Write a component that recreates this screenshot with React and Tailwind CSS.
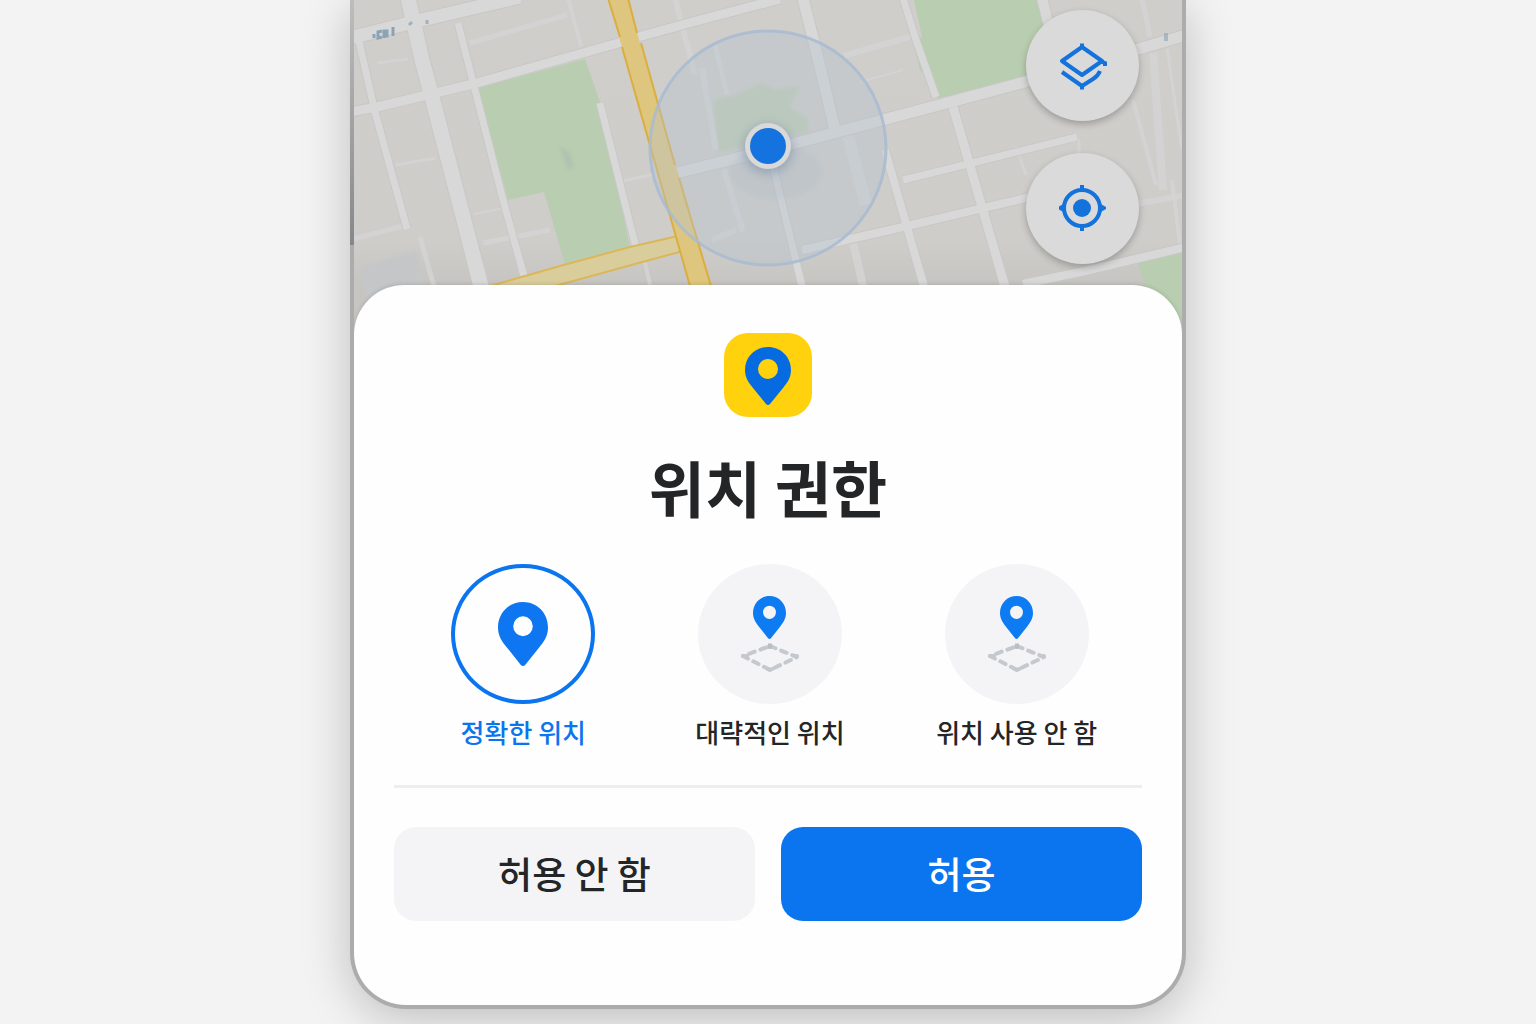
import { useState } from "react";

const parks = [
  "M478 88L585 59L601 105L630 248L565 265L544 192L508 200Z",
  "M914 0H1040L1060 74L938 98L930 70L920 71L913 40L922 37Z",
  "M1138 263L1182 252V335H1160Z",
];

// Each street is [path, width].
const streets = [
  ["M357 30L361 50L375 112L407 229", 7],
  ["M350 112L377 107L473 84L622 42", 9],
  ["M638 37L700 20L780 -1", 9],
  ["M350 38L417 21L520 -3", 13],
  ["M408 -2L422 60L432 97L482 290", 15],
  ["M458 23L474 86L503 200L524 276", 7],
  ["M600 103L636 248", 7],
  ["M803 -2L822 75L835 130", 11],
  ["M676 173L770 150L890 118L1025 82L1186 35", 11],
  ["M772 162L803 290", 7],
  ["M885 150L925 290", 8],
  ["M802 250L890 230L1060 190", 8],
  ["M903 -2L915 37L936 97", 7],
  ["M903 180L1077 137", 7],
  ["M953 107L1006 290", 9],
  ["M1042 -2L1050 30", 10],
  ["M1023 284L1085 271L1186 247", 8],
];

const lanes = [
  ["M675 -2L695 75", 6],
  ["M702 68L716 150", 6],
  ["M724 170L743 232", 6],
  ["M848 135L866 205", 12],
  ["M852 238L864 290", 8],
  ["M470 43L567 15", 5],
  ["M568 -2L581 46", 4],
  ["M377 63L408 59", 3],
  ["M395 165L436 158", 3],
  ["M483 243L550 230", 5],
  ["M350 240L407 225", 5],
  ["M420 237L435 290", 5],
  ["M474 214L505 208", 2],
  ["M715 45L727 95", 5],
  ["M843 56L910 37", 6],
  ["M903 70L860 82", 2],
  ["M623 181L655 174", 3],
  ["M712 240L736 230", 6],
  ["M645 262L650 285", 4],
  ["M1142 -2L1150 37", 5],
  ["M1153 53L1163 190", 8],
  ["M1133 100L1156 185", 4],
  ["M1167 48L1182 150", 3],
  ["M1120 207L1186 195", 6],
  ["M1172 180L1180 245", 4],
  ["M1016 146L1026 175", 3],
  ["M1079 140L1079 155", 3],
];

function MapCanvas() {
  return (
    <svg
      className="block h-full w-full"
      viewBox="354 0 828 335"
      preserveAspectRatio="xMidYMin slice"
      role="img"
      aria-label="지도"
    >
      <defs>
        <linearGradient id="ground" x1="0" y1="0" x2="0" y2="1">
          <stop offset="0" stopColor="#cfcecb" />
          <stop offset="0.72" stopColor="#cfcdca" />
          <stop offset="0.85" stopColor="#c6c5c2" />
        </linearGradient>
        <filter id="soft" x="-20%" y="-20%" width="140%" height="140%">
          <feGaussianBlur stdDeviation="2" />
        </filter>
        <filter id="glow" x="-60%" y="-60%" width="220%" height="220%">
          <feGaussianBlur stdDeviation="5" />
        </filter>
      </defs>
      <rect x="354" width="828" height="335" fill="url(#ground)" />
      <path d="M360 267L417 250L425 295L366 300Z" fill="#c4c6c7" filter="url(#soft)" />
      {parks.map((d) => (
        <path key={d} d={d} fill="#b9ceb0" />
      ))}
      <path d="M559 146L570 152L574 168L568 170Z" fill="#aec2b0" filter="url(#soft)" />
      <path
        d="M713 100L735 95L763 82L773 89L800 86L790 108L808 118V133L773 140L717 153Z"
        fill="#bfccb3"
        filter="url(#soft)"
      />
      <g fill="none" strokeLinejoin="round">
        {lanes.map(([d, w]) => (
          <path key={d} d={d} stroke="#d5d5d4" strokeWidth={w} opacity="0.8" />
        ))}
        {streets.map(([d, w]) => (
          <path key={d} d={d} stroke="#c8c7c5" strokeWidth={w + 2} />
        ))}
        {streets.map(([d, w]) => (
          <path key={d} d={d} stroke="#d8d8d8" strokeWidth={w} />
        ))}
      </g>
      <path d="M490 286L630 247L678 235L683 251L635 263L555 286Z" fill="#dacd9c" />
      <path d="M490 286L560 266L630 247L678 236M555 286L635 264L683 251" fill="none" stroke="#dcb75a" strokeWidth="2" />
      <path d="M608 -2H628L637 33L711 286L725 335H705L690 286L622 47Z" fill="#dec67e" />
      <path
        d="M608 -2L620 37M628 -2L637 33M622 47L690 286M641 43L675 165M679 178L711 286"
        fill="none"
        stroke="#dbae40"
        strokeWidth="2"
      />
      <g fill="none" stroke="#8aa3b5" strokeWidth="3">
        <path d="M374 34V38M382 31L378 32V38L382 37M384 38V31H387V36H384M393 27V36" />
        <path d="M409 25L412 22M427 20V24" opacity="0.7" />
        <path d="M1166 33V41" strokeWidth="4" opacity="0.6" />
      </g>
      <ellipse cx="768" cy="148" rx="118" ry="117" fill="#b5c3cf" fillOpacity="0.38" stroke="#a8bbd1" strokeWidth="3" strokeOpacity="0.85" />
      <ellipse cx="776" cy="172" rx="46" ry="27" fill="#a6b4bd" opacity="0.18" filter="url(#soft)" />
      <circle cx="768" cy="149" r="25" fill="#7489a3" opacity="0.5" filter="url(#glow)" />
      <circle cx="768" cy="146" r="23" fill="#d9d9d9" />
      <circle cx="768" cy="146" r="18" fill="#1473de" />
    </svg>
  );
}

function Pin({ className, hole }) {
  return (
    <svg className={className} viewBox="0 0 46 58" preserveAspectRatio="none" fill="currentColor" aria-hidden="true">
      <path
        fillRule="evenodd"
        d={`M23 0C10 0 0 10 0 23C0 31 4 36 8 41L21 57Q23 59 25 57L38 41C42 36 46 31 46 23C46 10 36 0 23 0ZM${23 - hole} 22a${hole} ${hole} 0 1 0 ${hole * 2} 0a${hole} ${hole} 0 1 0 ${-hole * 2} 0Z`}
      />
    </svg>
  );
}

function AreaPin() {
  return (
    <span className="flex flex-col items-center">
      <Pin className="h-[43px] w-[33px] text-[#0d7bf2]" hole={9} />
      <svg className="mt-1 h-[30px] w-[60px]" viewBox="0 0 60 30" fill="none" stroke="#c5c9ce" aria-hidden="true">
        <path d="M30 3L57 14L30 27L3 13Z" strokeWidth="4" strokeLinecap="round" strokeLinejoin="round" strokeDasharray="6 6" />
        <path d="M28 4H32M3 13H7M54 13H57M28 26L30 27L32 26" strokeWidth="4" strokeLinejoin="round" strokeLinecap="round" />
        <path d="M28 3H32" stroke="#b9bec3" strokeWidth="5" />
      </svg>
    </span>
  );
}

function LayersIcon() {
  return (
    <svg className="h-12 w-12" viewBox="0 0 48 48" fill="none" stroke="#1472dc" strokeWidth="4" aria-hidden="true">
      <path d="M23 5L3 19L23 33L43 19Z" strokeLinejoin="round" />
      <path d="M41 19L46 21V24" />
      <path d="M3 30L23 44L34 37Q39 34 41 29" strokeLinejoin="round" />
      <path d="M21 3H25M21 46H25" strokeWidth="3" />
    </svg>
  );
}

function LocateIcon() {
  return (
    <svg className="h-12 w-12" viewBox="0 0 48 48" fill="none" stroke="#1472dc" strokeWidth="4" aria-hidden="true">
      <circle cx="23" cy="23" r="18" />
      <circle cx="23" cy="23" r="9" fill="#1472dc" stroke="none" />
      <path d="M23 0V7M23 39V46" />
      <path d="M-1 22L6 18V28L-1 24ZM47 22L40 18V28L47 24Z" fill="#1472dc" stroke="none" />
    </svg>
  );
}

const options = [
  { id: "precise", label: "정확한 위치" },
  { id: "approximate", label: "대략적인 위치" },
  { id: "none", label: "위치 사용 안 함" },
];

const fab =
  "flex h-[111px] w-[113px] items-center justify-center rounded-[50%] bg-[#dadada] shadow-[0_3px_7px_rgba(0,0,0,0.25)]";

export default function App() {
  const [mode, setMode] = useState("precise");

  return (
    <div className="min-h-screen overflow-hidden bg-[#f3f3f3] pb-[15px] font-['Noto_Sans_CJK_KR',sans-serif] text-[#242527]">
      <main className="mx-auto w-full max-w-[836px] rounded-b-[56px] bg-[#acacac] bg-[linear-gradient(#bdbdbd,#85888a)] bg-[length:4px_245px] bg-no-repeat px-1 pb-1 shadow-[0_10px_48px_rgba(0,0,0,0.22)]">
        <div className="overflow-hidden rounded-b-[52px]">
          <div className="relative h-[335px]">
            <MapCanvas />
            <div className="absolute top-2.5 right-[43px] flex flex-col gap-8">
              <button type="button" aria-label="지도 레이어" className={fab}>
                <LayersIcon />
              </button>
              <button type="button" aria-label="내 위치" className={fab}>
                <LocateIcon />
              </button>
            </div>
          </div>

          <section
            aria-labelledby="sheet-title"
            className="relative -mt-[50px] rounded-t-[50px] bg-[#fefefe] px-10 pt-12 pb-[84px] shadow-[0_-1px_4px_rgba(0,0,0,0.12)]"
          >
            <div className="mx-auto flex h-[84px] w-[88px] items-start justify-center rounded-3xl bg-[#ffd20d] pt-3.5 text-[#066be0]">
              <Pin className="h-[58px] w-[46px]" hole={10} />
            </div>

            <h1 id="sheet-title" className="mt-[26px] text-center text-[61px] leading-[88px] font-bold">
              위치 권한
            </h1>

            <fieldset aria-label="위치 정확도" className="mt-[33px] grid grid-cols-3 pr-0.5 pl-1.5">
              {options.map(({ id, label }) => (
                <label key={id} className="flex cursor-pointer flex-col items-center">
                  <input
                    type="radio"
                    name="accuracy"
                    value={id}
                    checked={mode === id}
                    onChange={() => setMode(id)}
                    className="peer sr-only"
                  />
                  <span className="flex h-[140px] w-36 items-center justify-center rounded-[50%] border-4 border-transparent bg-[#f4f4f6] peer-checked:border-[#0b75f0] peer-checked:bg-transparent">
                    {id === "precise" ? <Pin className="h-16 w-[50px] text-[#0d76f0]" hole={9} /> : <AreaPin />}
                  </span>
                  <span className="mt-2 text-[26px] leading-10 font-medium peer-checked:text-[#0b75f0]">{label}</span>
                </label>
              ))}
            </fieldset>

            <hr className="mt-[33px] border-t-[3px] border-[#eeeeef]" />

            <div className="mt-[39px] grid grid-cols-2 gap-[26px]">
              <button type="button" className="h-[94px] rounded-[22px] bg-[#f4f4f6] text-[37px] font-medium">
                허용 안 함
              </button>
              <button type="button" className="h-[94px] rounded-[22px] bg-[#0b75ef] text-[37px] font-medium text-white">
                허용
              </button>
            </div>
          </section>
        </div>
      </main>
    </div>
  );
}
